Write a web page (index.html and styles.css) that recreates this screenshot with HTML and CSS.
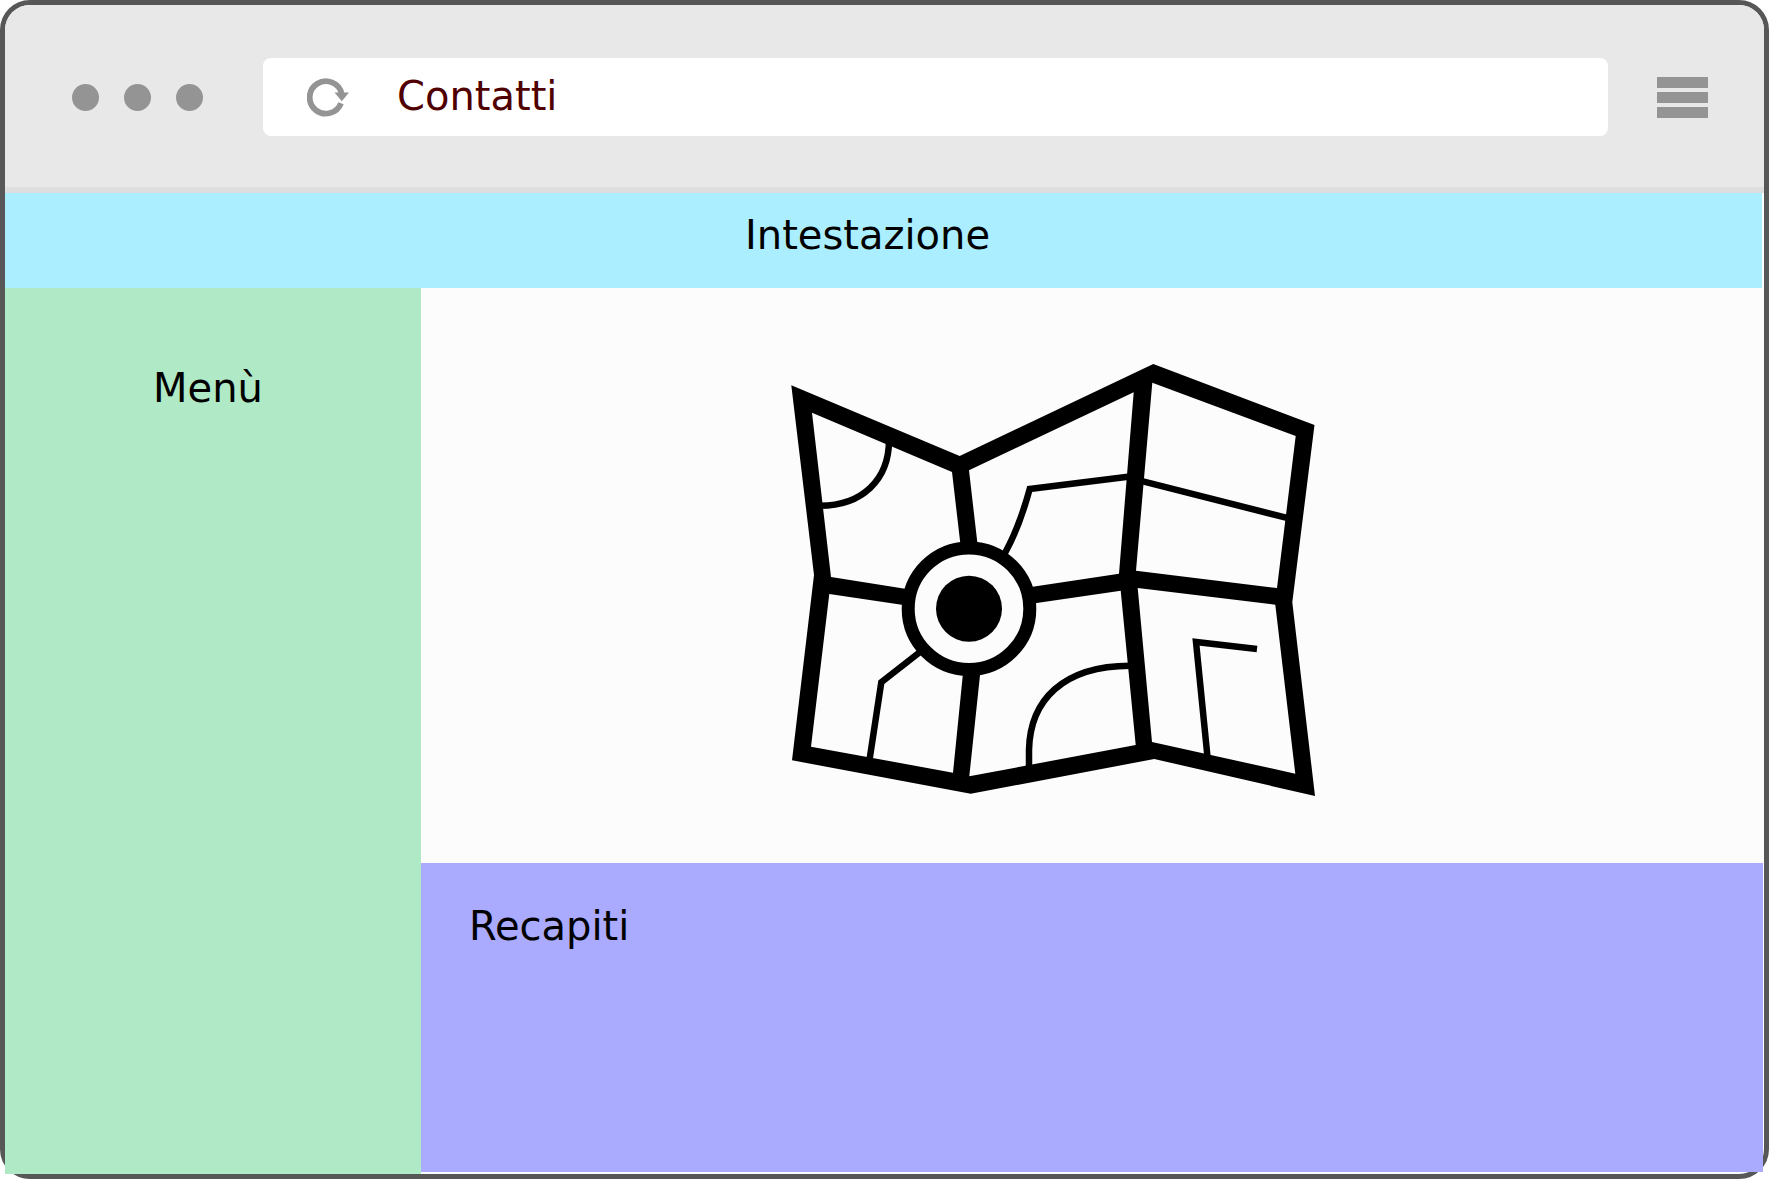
FILE: index.html
```html
<!DOCTYPE html>
<html lang="it">
<head>
<meta charset="utf-8">
<meta name="viewport" content="width=device-width, initial-scale=1">
<title>Contatti</title>
<link rel="stylesheet" href="styles.css">
</head>
<body>
<div class="window">
  <div class="toolbar">
    <div class="dots">
      <span class="dot"></span>
      <span class="dot"></span>
      <span class="dot"></span>
    </div>
    <div class="address">
      <button class="icon-button" type="button" aria-label="Ricarica">
        <svg class="reload" viewBox="0 0 42 40" width="42" height="40" aria-hidden="true">
          <path d="M34.6 16.5A16.2 16.2 0 1 0 34 26.2" fill="none" stroke="#949494" stroke-width="5.8"/>
          <path d="M27.5 15.5H42L34.8 24.3Z" fill="#949494"/>
        </svg>
      </button>
      <input class="address-input" type="text" value="Contatti" aria-label="Indirizzo">
    </div>
    <button class="menu-button" type="button" aria-label="Opzioni">
      <span class="bar"></span>
      <span class="bar"></span>
      <span class="bar"></span>
    </button>
  </div>

  <header class="header">Intestazione</header>

  <div class="page">
    <nav class="sidebar">Menù</nav>
    <main class="content">
      <section class="map-panel">
        <svg class="map" viewBox="791 364 524 432" role="img" aria-label="Mappa">
          <path fill-rule="evenodd" d="M791.3 385.3L959.7 456L1153.3 364L1314.5 425L1292.3 602.3L1315 796L1154.3 759L970.7 793.7L792 760.3L814 575Z
            M812 412.7L831 577L905 588.7L961 597L960.3 543.3L952 472Z
            M969 470.3L977.3 542.3L980 594L1032.7 586.7L1119 573.7L1133.7 392.3Z
            M1152.3 382.7L1136 570.7L1277 588L1295.7 436Z
            M829.3 594L811 746.7L953 772.7L962.7 676L962 613L901.7 604.7Z
            M1036.7 603L985 611L980 675.3L969.3 776.3L1135.7 745L1120.7 590.7Z
            M1137.7 588L1152 742L1295.3 773.7L1275.3 604.7Z"/>
          <g fill="none" stroke="#000" stroke-width="6.5">
            <path d="M889 440C889 480 862 505.7 820 505.7"/>
            <path d="M1005 553Q1019 528 1029.7 489L1130 476.5"/>
            <path d="M1140 480.7L1289 518.4"/>
            <path d="M920 652L881.3 682.3L869.5 760"/>
            <path d="M1029 768L1029 750C1030 700 1063 666 1130 665.7"/>
            <path d="M1257 649L1196 642L1207.5 757"/>
          </g>
          <circle cx="969" cy="608.7" r="60.8" fill="#fcfcfc" stroke="#000" stroke-width="13"/>
          <circle cx="969" cy="608.7" r="33"/>
        </svg>
      </section>
      <section class="contacts">Recapiti</section>
    </main>
  </div>
</div>
</body>
</html>
```
FILE: styles.css
```css
* {
  box-sizing: border-box;
}

body {
  margin: 0;
  background: #fff;
  color: #000;
  font-family: Verdana, "DejaVu Sans", sans-serif;
  font-size: 40px;
  line-height: 48px;
}

button {
  padding: 0;
  border: 0;
  background: none;
}

.window {
  display: flex;
  flex-direction: column;
  min-height: 100vh;
  border: 5px solid #575757;
  border-radius: 30px;
  background: #fcfcfc;
}

/* Browser toolbar */
.toolbar {
  display: flex;
  align-items: center;
  padding: 53px 56px 51px 67px;
  border-bottom: 6px solid #dedede;
  border-radius: 25px 25px 0 0;
  background: #e8e8e8;
}

.dots {
  display: flex;
  gap: 25px;
  margin-right: 60px;
}

.dot {
  width: 27px;
  height: 27px;
  border-radius: 50%;
  background: #949494;
}

.address {
  display: flex;
  flex: 1;
  align-items: center;
  gap: 48px;
  min-width: 0;
  height: 78px;
  padding-left: 44px;
  border-radius: 8px;
  background: #fff;
}

.icon-button,
.reload {
  display: block;
}

.address-input {
  flex: 1;
  min-width: 0;
  height: 48px;
  margin-bottom: 2px;
  padding: 0;
  border: 0;
  outline: 0;
  background: none;
  color: #500000;
  font: inherit;
}

.menu-button {
  display: flex;
  flex-direction: column;
  gap: 4px;
  width: 51px;
  margin-left: 49px;
}

.bar {
  width: 100%;
  height: 11px;
  background: #949494;
}

/* Page areas */
.header {
  margin-right: 2px;
  padding: 18px 32px 29px 0;
  background: #aef;
  text-align: center;
}

.page {
  display: grid;
  flex: 1;
  grid-template-columns: 416px 1fr;
}

.sidebar {
  padding: 76px 10px 0 0;
  background: #afe9c6;
  text-align: center;
}

.content {
  display: grid;
  grid-template-rows: 13fr 7fr;
  padding: 0 1px 2px 0;
}

.map-panel {
  display: flex;
  align-items: center;
  justify-content: center;
  padding: 10px 78px 0 0;
}

.map {
  width: 524px;
  max-width: 100%;
}

.contacts {
  padding: 39px 48px;
  background: #aaf;
}
```
